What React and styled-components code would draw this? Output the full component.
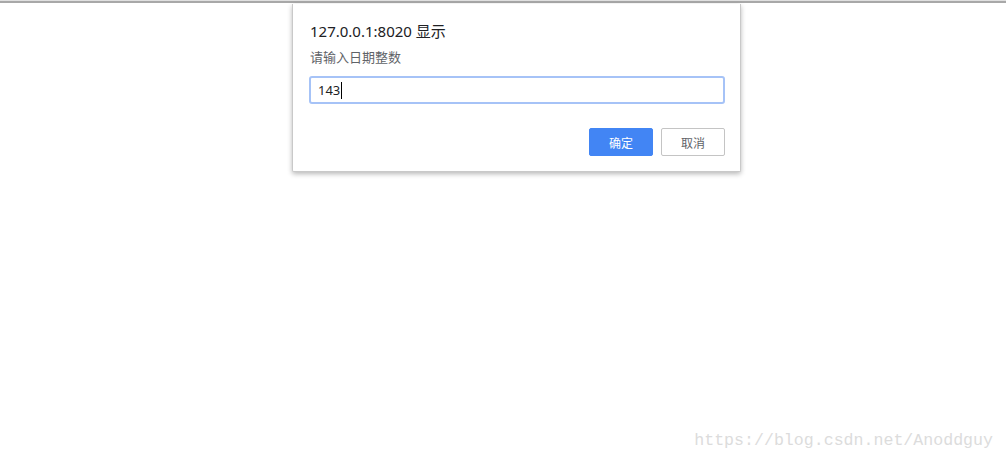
import React from "react";
import styled, { createGlobalStyle } from "styled-components";

const GlobalStyle = createGlobalStyle`
  html, body {
    margin: 0;
    padding: 0;
    background: #fff;
  }
  body {
    font-family: "Noto Sans", "Noto Sans CJK SC", sans-serif;
  }
`;

const Page = styled.div`
  position: relative;
  width: 1006px;
  height: 460px;
  overflow: hidden;
  border-top: 1px solid #e0e0e0;
  box-sizing: border-box;

  &::before {
    content: "";
    display: block;
    height: 2px;
    background: #a8a8a8;
  }
`;

const Dialog = styled.div`
  position: absolute;
  top: 3px;
  left: 292px;
  width: 449px;
  box-sizing: border-box;
  padding: 16px 15px 15px 16px;
  background: #fff;
  border: 1px solid #c9c9c9;
  border-top: none;
  border-radius: 0 0 2px 2px;
  box-shadow: 0 2px 5px rgba(0, 0, 0, 0.28);
  display: flex;
  flex-direction: column;
`;

const Title = styled.div`
  padding-left: 1px;
  font-size: 15px;
  line-height: 22px;
  color: #202124;
`;

const Message = styled.div`
  padding-left: 1px;
  margin-top: 6px;
  font-size: 13px;
  line-height: 18px;
  color: #5f6368;
`;

const Field = styled.div`
  margin-top: 10px;
  height: 28px;
  box-sizing: border-box;
  border: 2px solid #a6c3f7;
  border-radius: 3px;
  padding: 0 7px;
  display: flex;
  align-items: center;
  font-size: 13px;
  color: #202124;
`;

const Caret = styled.span`
  display: inline-block;
  width: 1px;
  height: 17px;
  margin-left: 1px;
  background: #000;
`;

const Actions = styled.div`
  margin-top: 24px;
  display: flex;
  justify-content: flex-end;
  gap: 8px;
`;

const Button = styled.button`
  width: 64px;
  height: 28px;
  box-sizing: border-box;
  border-radius: 2px;
  font-family: "Noto Sans CJK SC", sans-serif;
  font-size: 12px;
  padding: 0;
  border: 1px solid ${(p) => (p.$primary ? "#4285f4" : "#c4c4c4")};
  background: ${(p) => (p.$primary ? "#4285f4" : "#fff")};
  color: ${(p) => (p.$primary ? "#fff" : "#5f6368")};
`;

const Watermark = styled.div`
  position: absolute;
  right: 13px;
  bottom: 10px;
  font-family: "Liberation Mono", monospace;
  font-size: 16.6px;
  color: #dcdcdc;
`;

export default function App() {
  return (
    <>
      <GlobalStyle />
      <Page>
        <Dialog>
          <Title>127.0.0.1:8020 显示</Title>
          <Message>请输入日期整数</Message>
          <Field>
            143
            <Caret />
          </Field>
          <Actions>
            <Button $primary>确定</Button>
            <Button>取消</Button>
          </Actions>
        </Dialog>
        <Watermark>https://blog.csdn.net/Anoddguy</Watermark>
      </Page>
    </>
  );
}
